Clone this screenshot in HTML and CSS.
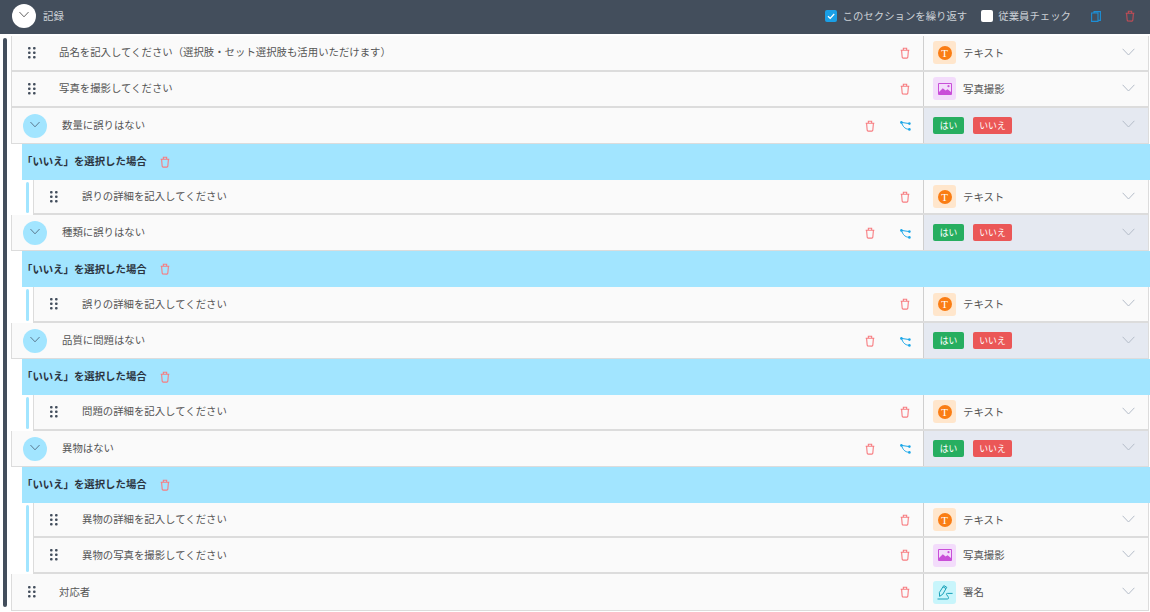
FILE: index.html
```html
<!DOCTYPE html>
<html lang="ja">
<head>
<meta charset="utf-8">
<title>記録</title>
<link rel="stylesheet" href="styles.css">
</head>
<body>
<svg class="defs" aria-hidden="true">
  <symbol id="trash" viewBox="0 0 12 14"><path d="M.8 3.6H11.2M4 3.6V1.2H8V3.6M1.9 3.6L2.6 12a1.2 1.2 0 0 0 1.2 1.1H8.2a1.2 1.2 0 0 0 1.2-1.1L10.1 3.6" fill="none" stroke="currentColor" stroke-width="1.3"/></symbol>
  <symbol id="branch" viewBox="0 0 11 10"><path d="M1.4 1.4L9.4 2.6M1.4 1.4C3 5.5 4.5 8 9.4 8.4" fill="none" stroke="currentColor" stroke-width="1"/><circle cx="1.4" cy="1.4" r="1.3" fill="currentColor"/><circle cx="9.4" cy="2.6" r="1.3" fill="currentColor"/><circle cx="9.4" cy="8.4" r="1.3" fill="currentColor"/></symbol>
  <symbol id="chev" viewBox="0 0 13 8"><path d="M.6.8L6.5 7L12.4.8" fill="none" stroke="currentColor" stroke-width="1"/></symbol>
  <symbol id="dots" viewBox="0 0 8 12"><g fill="currentColor"><rect x="0" y="0" width="2.6" height="2.6" rx="1"/><rect x="5" y="0" width="2.6" height="2.6" rx="1"/><rect x="0" y="4.5" width="2.6" height="2.6" rx="1"/><rect x="5" y="4.5" width="2.6" height="2.6" rx="1"/><rect x="0" y="9" width="2.6" height="2.6" rx="1"/><rect x="5" y="9" width="2.6" height="2.6" rx="1"/></g></symbol>
  <symbol id="photo" viewBox="0 0 14 12"><path d="M.5.5H13.5V11.5H.5Z" fill="none" stroke="currentColor"/><path d="M1 11.5V9L4.8 5.2L7.6 7.6L9.6 6.2L13 9V11.5Z" fill="currentColor"/><circle cx="10.5" cy="3.2" r="1.1" fill="currentColor"/></symbol>
  <symbol id="sign" viewBox="0 0 16 15"><path d="M2.4 7.5L2.6 11.4L5.8 9.2L9 3.6L6 1.8ZM6 1.8L6.8 .6L9.8 2.3L9 3.6" fill="none" stroke="currentColor" stroke-width="1"/><path d="M.5 14H10.4C11.8 14 11.8 12.6 11 11.6L9.6 9.6C9 8.8 9.6 8.4 10.4 8.4H15.6" fill="none" stroke="currentColor" stroke-width="1"/></symbol>
  <symbol id="copy" viewBox="0 0 10 11"><path d="M3 2V.6H9.4V9.4H7.6M.6 2H7V10.4H.6Z" fill="none" stroke="currentColor" stroke-width="1.1"/></symbol>
</svg>

<header class="topbar">
  <span class="toggle toggle-white"><svg class="i-chev-head"><use href="#chev"/></svg></span>
  <span class="section-name">記録</span>
  <label class="check"><span class="box box-on"><svg viewBox="0 0 12 12"><path d="M3 6.2L5.2 8.4L9.2 4" fill="none" stroke="#fff" stroke-width="1.3"/></svg></span>このセクションを繰り返す</label>
  <label class="check check-second"><span class="box"></span>従業員チェック</label>
  <svg class="i-copy"><use href="#copy"/></svg>
  <svg class="i-trash i-trash-head"><use href="#trash"/></svg>
</header>

<main class="page">
  <div class="spine"></div>
  <div class="list">

    <div class="row">
      <div class="main"><svg class="i-dots"><use href="#dots"/></svg><span class="q">品名を記入してください（選択肢・セット選択肢も活用いただけます）</span><svg class="i-trash"><use href="#trash"/></svg></div>
      <div class="type"><span class="tile tile-text"><span class="t-badge">T</span></span><span class="type-name">テキスト</span><svg class="i-chev"><use href="#chev"/></svg></div>
    </div>
    <div class="row">
      <div class="main"><svg class="i-dots"><use href="#dots"/></svg><span class="q">写真を撮影してください</span><svg class="i-trash"><use href="#trash"/></svg></div>
      <div class="type"><span class="tile tile-photo"><svg><use href="#photo"/></svg></span><span class="type-name">写真撮影</span><svg class="i-chev"><use href="#chev"/></svg></div>
    </div>

    <div class="row row-parent">
      <div class="main"><span class="toggle toggle-blue"><svg class="i-chev-head"><use href="#chev"/></svg></span><span class="q q-parent">数量に誤りはない</span><svg class="i-trash i-trash-parent"><use href="#trash"/></svg><svg class="i-branch"><use href="#branch"/></svg></div>
      <div class="type type-yn"><span class="btn btn-yes">はい</span><span class="btn btn-no">いいえ</span><svg class="i-chev"><use href="#chev"/></svg></div>
    </div>
    <div class="branch-head"><span>「いいえ」を選択した場合</span><svg class="i-trash"><use href="#trash"/></svg></div>
    <div class="branch">
      <div class="sub-rail"></div>
      <div class="subs">
        <div class="row row-sub">
          <div class="main"><svg class="i-dots"><use href="#dots"/></svg><span class="q">誤りの詳細を記入してください</span><svg class="i-trash"><use href="#trash"/></svg></div>
          <div class="type"><span class="tile tile-text"><span class="t-badge">T</span></span><span class="type-name">テキスト</span><svg class="i-chev"><use href="#chev"/></svg></div>
        </div>
      </div>
    </div>

    <div class="row row-parent">
      <div class="main"><span class="toggle toggle-blue"><svg class="i-chev-head"><use href="#chev"/></svg></span><span class="q q-parent">種類に誤りはない</span><svg class="i-trash i-trash-parent"><use href="#trash"/></svg><svg class="i-branch"><use href="#branch"/></svg></div>
      <div class="type type-yn"><span class="btn btn-yes">はい</span><span class="btn btn-no">いいえ</span><svg class="i-chev"><use href="#chev"/></svg></div>
    </div>
    <div class="branch-head"><span>「いいえ」を選択した場合</span><svg class="i-trash"><use href="#trash"/></svg></div>
    <div class="branch">
      <div class="sub-rail"></div>
      <div class="subs">
        <div class="row row-sub">
          <div class="main"><svg class="i-dots"><use href="#dots"/></svg><span class="q">誤りの詳細を記入してください</span><svg class="i-trash"><use href="#trash"/></svg></div>
          <div class="type"><span class="tile tile-text"><span class="t-badge">T</span></span><span class="type-name">テキスト</span><svg class="i-chev"><use href="#chev"/></svg></div>
        </div>
      </div>
    </div>

    <div class="row row-parent">
      <div class="main"><span class="toggle toggle-blue"><svg class="i-chev-head"><use href="#chev"/></svg></span><span class="q q-parent">品質に問題はない</span><svg class="i-trash i-trash-parent"><use href="#trash"/></svg><svg class="i-branch"><use href="#branch"/></svg></div>
      <div class="type type-yn"><span class="btn btn-yes">はい</span><span class="btn btn-no">いいえ</span><svg class="i-chev"><use href="#chev"/></svg></div>
    </div>
    <div class="branch-head"><span>「いいえ」を選択した場合</span><svg class="i-trash"><use href="#trash"/></svg></div>
    <div class="branch">
      <div class="sub-rail"></div>
      <div class="subs">
        <div class="row row-sub">
          <div class="main"><svg class="i-dots"><use href="#dots"/></svg><span class="q">問題の詳細を記入してください</span><svg class="i-trash"><use href="#trash"/></svg></div>
          <div class="type"><span class="tile tile-text"><span class="t-badge">T</span></span><span class="type-name">テキスト</span><svg class="i-chev"><use href="#chev"/></svg></div>
        </div>
      </div>
    </div>

    <div class="row row-parent">
      <div class="main"><span class="toggle toggle-blue"><svg class="i-chev-head"><use href="#chev"/></svg></span><span class="q q-parent">異物はない</span><svg class="i-trash i-trash-parent"><use href="#trash"/></svg><svg class="i-branch"><use href="#branch"/></svg></div>
      <div class="type type-yn"><span class="btn btn-yes">はい</span><span class="btn btn-no">いいえ</span><svg class="i-chev"><use href="#chev"/></svg></div>
    </div>
    <div class="branch-head"><span>「いいえ」を選択した場合</span><svg class="i-trash"><use href="#trash"/></svg></div>
    <div class="branch">
      <div class="sub-rail"></div>
      <div class="subs">
        <div class="row row-sub">
          <div class="main"><svg class="i-dots"><use href="#dots"/></svg><span class="q">異物の詳細を記入してください</span><svg class="i-trash"><use href="#trash"/></svg></div>
          <div class="type"><span class="tile tile-text"><span class="t-badge">T</span></span><span class="type-name">テキスト</span><svg class="i-chev"><use href="#chev"/></svg></div>
        </div>
        <div class="row row-sub">
          <div class="main"><svg class="i-dots"><use href="#dots"/></svg><span class="q">異物の写真を撮影してください</span><svg class="i-trash"><use href="#trash"/></svg></div>
          <div class="type"><span class="tile tile-photo"><svg><use href="#photo"/></svg></span><span class="type-name">写真撮影</span><svg class="i-chev"><use href="#chev"/></svg></div>
        </div>
      </div>
    </div>

    <div class="row">
      <div class="main"><svg class="i-dots"><use href="#dots"/></svg><span class="q">対応者</span><svg class="i-trash"><use href="#trash"/></svg></div>
      <div class="type"><span class="tile tile-sign"><svg><use href="#sign"/></svg></span><span class="type-name">署名</span><svg class="i-chev"><use href="#chev"/></svg></div>
    </div>

  </div>
</main>
</body>
</html>
```

FILE: styles.css
```css
* { box-sizing: border-box; }
html, body { margin: 0; height: 100%; overflow: hidden; }
body {
  background: #fff;
  font-family: "Noto Sans CJK JP", "Noto Sans", sans-serif;
  font-size: 10.4px;
  line-height: 14px;
  color: #555;
}
.defs { display: none; }

/* top bar */
.topbar {
  height: 34px;
  display: flex;
  align-items: center;
  padding: 0 0 2px 12px;
  background: #434e5c;
  color: #ccd1d6;
}
.toggle {
  flex: none;
  width: 24px;
  height: 24px;
  border-radius: 50%;
  display: flex;
  align-items: center;
  justify-content: center;
}
.toggle-white { background: #fff; color: #333; }
.toggle-blue { background: #a2e5ff; color: #45586c; margin: 1px 0 0 11px; }
.i-chev-head { width: 10px; height: 7px; margin-top: -3px; }
.section-name { margin-left: 7px; margin-right: auto; }
.check { display: flex; align-items: center; }
.check-second { margin-left: 14px; }
.box {
  width: 12px;
  height: 12px;
  margin-right: 6px;
  border-radius: 2px;
  background: #fff;
  display: block;
}
.box svg { display: block; width: 12px; height: 12px; }
.box-on { background: #1a9fe6; }
.check-second .box { margin-right: 5px; }
.i-copy { width: 10px; height: 11px; margin-left: 20px; color: #1d8fd6; }
.i-trash {
  flex: none;
  width: 10px;
  height: 12px;
  color: #f77c80;
}
.i-trash-head { margin-left: 24px; margin-right: 15px; color: #c24c55; }

/* layout */
.page { display: flex; padding-left: 3px; }
.spine {
  flex: none;
  width: 4px;
  height: 569px;
  margin-top: 4px;
  border-radius: 2px;
  background: #434e5c;
}
.list { flex: 1; min-width: 0; margin-left: 4px; padding: 2px 1px 0 0; }

/* rows */
.row {
  display: flex;
  height: 35.9px;
  background: #fafafa;
  border-left: 1px solid #dcdcdc;
  border-right: 1px solid #dcdcdc;
  border-bottom: 2px solid #dcdcdc;
}
.list > .row:last-child { height: 37px; border-bottom-width: 1px; }
.main {
  flex: 1;
  min-width: 0;
  display: flex;
  align-items: center;
  padding-right: 13px;
}
.type {
  flex: none;
  width: 225px;
  display: flex;
  align-items: center;
  padding: 0 13px 0 9px;
  border-left: 1px solid #cfcfcf;
}
.type-yn { background: #e5e9f1; }
.row-parent { border-bottom-width: 1px; }
.i-dots { flex: none; width: 8px; height: 12px; margin-left: 16px; color: #434e5c; }
.q { margin-left: 23px; margin-right: auto; margin-top: -1px; white-space: nowrap; }
.q-parent { margin-left: 15px; }
.row-sub .i-dots { margin-left: 16px; }
.row-sub .q { margin-left: 24px; }
.i-trash-parent { margin: 1px 25px 0 0; }
.i-branch { flex: none; width: 11px; height: 10px; color: #1ca7e8; margin: 2px -1px 0 0; }
.i-chev { flex: none; width: 13px; height: 8px; margin-left: auto; margin-top: -2px; color: #b4bcc8; }
.tile {
  flex: none;
  width: 23px;
  height: 23px;
  border-radius: 3px;
  display: flex;
  align-items: center;
  justify-content: center;
}
.tile-text { background: #ffe6cc; }
.tile-photo { background: #f3dcfb; color: #c94fd8; }
.tile-photo svg { width: 14px; height: 12px; }
.tile-sign { background: #c8f5fb; color: #18a0b8; }
.tile-sign svg { width: 16px; height: 15px; }
.t-badge {
  width: 14px;
  height: 14px;
  border-radius: 50%;
  background: #fa7d14;
  color: #fff;
  font-family: "Liberation Serif", serif;
  font-size: 11px;
  line-height: 14px;
  text-align: center;
}
.type-name { margin-left: 7px; }
.btn {
  height: 17px;
  border-radius: 2px;
  color: #fff;
  font-size: 8.8px;
  line-height: 17px;
  text-align: center;
}
.btn-yes { width: 31px; background: #27ae60; }
.btn-no { width: 39px; margin-left: 9px; background: #eb5757; }

/* branches */
.branch-head {
  height: 35.9px;
  margin: 0 -1px 0 11px;
  display: flex;
  align-items: center;
  gap: 13px;
  background: #a2e5ff;
  color: #2b3440;
  font-weight: 700;
}
.branch-head span { margin-top: -1px; }
.branch { display: flex; margin-left: 11px; }
.sub-rail {
  flex: none;
  width: 3px;
  margin: 2px 4px;
  border-radius: 2px;
  background: #a2e5ff;
}
.subs { flex: 1; min-width: 0; }
```
